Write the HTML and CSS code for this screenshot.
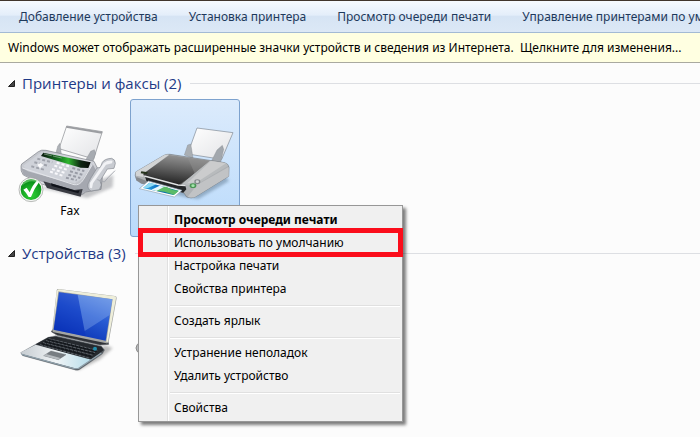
FILE: index.html
```html
<!DOCTYPE html>
<html lang="ru">
  <head>
    <meta charset="UTF-8" />
    <meta name="viewport" content="width=device-width, initial-scale=1.0" />
    <title>Устройства и принтеры</title>
    <link rel="stylesheet" href="styles.css">
  </head>
  <body>
    <nav class="toolbar">
      <button type="button">Добавление устройства</button>
      <button type="button">Установка принтера</button>
      <button type="button">Просмотр очереди печати</button>
      <button type="button">Управление принтерами по умолчанию</button>
    </nav>
    <a class="infobar" href="#">Windows может отображать расширенные значки устройств и сведения из Интернета.&nbsp; Щелкните для изменения...</a>

    <main class="content">
      <section>
        <h2 class="group">
          <svg class="arrow" viewBox="0 0 7 7"><path d="M6.5 0.5V6.5H0.5Z" /></svg>
          <span>Принтеры и факсы (2)</span>
        </h2>
        <div class="tiles">
          <div class="tile">
            <svg class="icon" viewBox="60 72 300 240">
              <defs>
                <linearGradient id="faxBody" x1="0" y1="0" x2="1" y2="1">
                  <stop offset="0" stop-color="#b9bcc3" />
                  <stop offset="0.5" stop-color="#dfe1e6" />
                  <stop offset="1" stop-color="#9a9da5" />
                </linearGradient>
                <linearGradient id="paper" x1="0" y1="0" x2="1" y2="1">
                  <stop offset="0" stop-color="#ffffff" />
                  <stop offset="1" stop-color="#e2e3e6" />
                </linearGradient>
                <linearGradient id="faxScreen">
                  <stop offset="0" stop-color="#0c1a10" />
                  <stop offset="0.35" stop-color="#14731f" />
                  <stop offset="0.55" stop-color="#2fb52f" />
                  <stop offset="0.8" stop-color="#0d2412" />
                  <stop offset="1" stop-color="#070b08" />
                </linearGradient>
                <radialGradient id="okGreen" cx="0.5" cy="0.75" r="0.7">
                  <stop offset="0" stop-color="#2fd236" />
                  <stop offset="1" stop-color="#078b17" />
                </radialGradient>
                <filter id="soft" x="-20%" y="-50%" width="140%" height="200%">
                  <feGaussianBlur stdDeviation="5" />
                </filter>
              </defs>
              <path d="M110 262L262 294L338 262L340 225L250 258Z" fill="#8d8f94" opacity="0.5" filter="url(#soft)" />
              <path d="M200 78L307 95L281 177L177 146Z" fill="url(#paper)" stroke="#85888d" stroke-width="2" />
              <path d="M200 78L307 95L305 101L198 83Z" fill="#9b9da1" />
              <path d="M168 158L173 139L179 130L182 146L184 162Z" fill="#aeb2b7" stroke="#7f8388" />
              <path d="M257 180L272 154L283 149L287 160L278 187Z" fill="#a7abb1" stroke="#7f8388" />
              <path d="M63 198Q61 214 70 225L125 252L229 284Q242 290 257 276L303 268L307 233L282 184L138 151Q124 148 115 155L72 187Q63 191 63 198Z" fill="url(#faxBody)" stroke="#7b7f87" stroke-width="2" />
              <path d="M70 197L125 156L280 187L247 236L224 250L84 212Z" fill="#cfd2d9" />
              <path d="M63 202L84 214L221 252Q238 256 249 239L278 192L300 235L296 262L249 276Q238 289 221 281L71 225Z" fill="#a5a8b0" />
              <path d="M67 204L222 254Q239 257 250 239L277 194" fill="none" stroke="#e2e4e9" stroke-width="3" />
              <path d="M130 244L223 270L248 267L242 290L141 264Z" fill="#393b42" />
              <path d="M153 250L227 272L239 271L235 280L155 258Z" fill="#10131a" />
              <path d="M130 158L272 187L265 204L242 203L123 168Z" fill="url(#faxScreen)" />
              <path d="M132 162L155 167M159 168L185 174" stroke="#9eaa9e" stroke-width="2" />
              <g fill="none" stroke-width="6" stroke-dasharray="9 6">
                <path d="M112 176L157 187M103 187L147 198M94 199L136 210" stroke="#9fa2ab" />
                <path d="M170 188L207 199M163 197L201 209M156 207L196 219M150 215L188 227" stroke="#f8f8fb" />
                <path d="M217 204L253 213M210 214L247 224M205 224L241 234M198 233L230 241" stroke="#989ba5" />
              </g>
              <path d="M112 194L123 188L130 196L120 205Z" fill="#f9f9fb" />
              <path d="M307 187Q314 176 335 175Q346 178 346 190L342 205L322 207L300 243L304 255L298 269L273 273Q261 267 264 252L272 235L291 204L301 202Z" fill="#c8cbd1" stroke="#858991" stroke-width="2" />
              <path d="M311 189Q323 180 338 182L336 190L318 194L279 250L276 265L269 263L270 248Z" fill="#f1f2f5" />
              <path d="M292 239L313 246L325 232L345 212" fill="none" stroke="#a6a9b0" stroke-width="3" />
              <circle cx="93" cy="269" r="36" fill="#f4f6f4" stroke="#989c98" stroke-width="2" />
              <circle cx="93" cy="269" r="31" fill="url(#okGreen)" />
              <path d="M66 257Q90 234 119 250Q112 238 93 238Q72 239 66 257Z" fill="#7bd37b" opacity="0.65" />
              <path d="M70 269L80 263L89 277Q97 255 111 242L117 247Q103 265 93 291H86Q79 278 70 269Z" fill="#fff" />
            </svg>
            <span>Fax</span>
          </div>
          <div class="tile selected">
            <svg class="icon" viewBox="30 87 300 240">
              <defs>
                <linearGradient id="lid" x1="0.6" y1="0" x2="0.35" y2="1">
                  <stop offset="0" stop-color="#969696" />
                  <stop offset="0.45" stop-color="#626262" />
                  <stop offset="1" stop-color="#1c1c1c" />
                </linearGradient>
                <linearGradient id="photo">
                  <stop offset="0" stop-color="#35b0e8" />
                  <stop offset="0.5" stop-color="#0864b8" />
                  <stop offset="1" stop-color="#16a17a" />
                </linearGradient>
              </defs>
              <path d="M50 272L180 306L220 312L312 258L290 230Z" fill="#5d7890" opacity="0.5" filter="url(#soft)" />
              <path d="M216 99L324 113L290 193L188 177Z" fill="url(#paper)" stroke="#7d8791" stroke-width="2" />
              <path d="M178 180L188 150L197 147L200 163L204 190Z" fill="#a9aeb3" stroke="#7b8288" />
              <path d="M257 203L276 165L292 151L296 163L286 207Z" fill="#a2a7ad" stroke="#7b8288" />
              <path d="M32 231L117 181Q125 177 135 178L299 203Q311 207 312 217L311 244L210 306Q199 311 185 306L177 294L65 263L33 251Q29 242 32 231Z" fill="#aeb1b4" stroke="#767c82" stroke-width="2" />
              <path d="M216 270L311 216V244L210 306Q199 310 188 305Z" fill="#c1c3c5" />
              <path d="M32 231L117 181Q124 178 132 179L57 235L55 246L33 242Z" fill="#d2d4d5" />
              <path d="M133 180L255 197L171 267Q165 272 158 270L58 242Q52 239 58 234Z" fill="url(#lid)" />
              <path d="M188 188L255 197L171 267L160 270L210 237Z" fill="#929292" opacity="0.45" />
              <path d="M255 197L299 203Q308 206 309 213L214 269Q197 275 180 267L171 266Z" fill="#b8bbbd" />
              <path d="M257 198L303 205L216 262L187 265Z" fill="#cbcccd" />
              <path d="M59 240L158 269L181 273L184 283L175 293L65 262Z" fill="#242628" />
              <path d="M58 243L159 270L181 272" fill="none" stroke="#e1e3e4" stroke-width="4" />
              <path d="M34 246L65 258L69 270L49 266L33 256Z" fill="#85898d" />
              <path d="M49 229L69 232L65 238L47 235Z" fill="#26331d" />
              <path d="M70 258L171 286L148 306L43 281Z" fill="#fff" stroke="#8fa2b2" stroke-width="2" />
              <path d="M73 263L161 287L145 300L54 279Z" fill="url(#photo)" />
              <path d="M73 263L94 268L69 279L54 279Z" fill="#8edaf3" />
              <path d="M88 287Q105 272 125 276L143 285L161 288L148 299L118 290Z" fill="#5cbb68" />
              <path d="M104 272L118 275L94 288L79 284Z" fill="#e6f7fd" />
              <ellipse cx="217" cy="260" rx="9" ry="7" fill="#83888b" />
              <ellipse cx="217" cy="260" rx="5" ry="4" fill="#d3d6d7" />
              <ellipse cx="204" cy="272" rx="10" ry="7" fill="#4a9455" />
              <ellipse cx="204" cy="272" rx="5" ry="4" fill="#a4e6ac" />
            </svg>
          </div>
        </div>
      </section>

      <section>
        <h2 class="group">
          <svg class="arrow" viewBox="0 0 7 7"><path d="M6.5 0.5V6.5H0.5Z" /></svg>
          <span>Устройства (3)</span>
        </h2>
        <div class="tiles devices">
          <div class="tile">
            <svg class="icon tall" viewBox="60 150 300 264">
              <defs>
                <linearGradient id="display" x1="0.8" y1="0" x2="0.3" y2="1">
                  <stop offset="0" stop-color="#608ce3" />
                  <stop offset="0.45" stop-color="#285bd3" />
                  <stop offset="1" stop-color="#0730b2" />
                </linearGradient>
                <linearGradient id="palmrest">
                  <stop offset="0" stop-color="#c7cdd2" />
                  <stop offset="0.5" stop-color="#f0f4f6" />
                  <stop offset="1" stop-color="#b5dcea" />
                </linearGradient>
              </defs>
              <path d="M215 390L315 328L338 336L300 370L236 402Z" fill="#777" opacity="0.5" filter="url(#soft)" />
              <path d="M154 287L172 298L300 327L326 325L324 317L158 281Z" fill="#303338" stroke="#55585d" stroke-width="2" />
              <path d="M176 159L345 180Q351 181 350 187L326 318Q325 323 319 322L161 289Q156 287 157 282L170 163Q171 158 176 159Z" fill="#a4a6a4" />
              <path d="M176 160L345 181Q349 182 348 187L324 317L319 318L338 190L175 166L159 280L170 164Z" fill="#eeeeda" />
              <path d="M177 169L337 190L317 314L161 281Z" fill="url(#display)" />
              <path d="M177 169L233 176L257 301L161 281Z" fill="#082fbe" opacity="0.35" />
              <path d="M233 176L337 190L329 237Q280 269 254 285Z" fill="#a7c8f6" opacity="0.3" />
              <path d="M62 350L144 304L167 299L304 330L314 342L307 354L238 401Q231 404 222 401L68 359Z" fill="#555b60" stroke="#747a7e" />
              <path d="M107 325L146 304L168 302L304 332L311 342L271 374Z" fill="#25292e" />
              <g fill="none" stroke="#788088" stroke-width="2" stroke-dasharray="9 3">
                <path d="M146 308L292 343M138 314L285 350M129 320L279 358M120 326L270 367" />
              </g>
              <g stroke="#11151a" stroke-width="4">
                <path d="M143 311L290 346M134 317L283 353M125 323L276 362" stroke-dasharray="10 2" />
              </g>
              <path d="M63 349L107 326L274 371L235 397L222 396L65 354Z" fill="url(#palmrest)" />
              <path d="M65 355L222 398L236 397L304 351" fill="none" stroke="#8fa0ab" stroke-width="4" />
              <path d="M153 345L198 356L175 371L131 359Z" fill="#777d82" stroke="#555b60" />
              <path d="M131 359L175 371L181 366L138 354Z" fill="#b6bbbf" />
              <circle cx="285" cy="338" r="6" fill="#218eae" />
            </svg>
          </div>
          <div class="tile">
            <svg class="icon tall" viewBox="0 0 100 88">
              <ellipse cx="18" cy="62" rx="17" ry="9" fill="#b9bbbe" stroke="#888" />
            </svg>
          </div>
        </div>
      </section>

      <div class="menu" role="menu">
        <button type="button" role="menuitem" class="default">Просмотр очереди печати</button>
        <button type="button" role="menuitem" class="marked">Использовать по умолчанию</button>
        <button type="button" role="menuitem">Настройка печати</button>
        <button type="button" role="menuitem">Свойства принтера</button>
        <hr />
        <button type="button" role="menuitem">Создать ярлык</button>
        <hr />
        <button type="button" role="menuitem">Устранение неполадок</button>
        <button type="button" role="menuitem">Удалить устройство</button>
        <hr />
        <button type="button" role="menuitem">Свойства</button>
      </div>
    </main>
  </body>
</html>
```
FILE: styles.css
```css
* {
  box-sizing: border-box;
}
body {
  margin: 0;
  min-height: 100vh;
  background: #fcfcfc;
  font-family: "Noto Sans", "Open Sans", sans-serif;
  font-size: 12px;
  color: #000;
}
button {
  border: 0;
  padding: 0;
  background: none;
  font: inherit;
  white-space: nowrap;
}

.toolbar {
  display: flex;
  gap: 31px;
  height: 33px;
  padding: 0 19px;
  border-top: 1px solid #40352c;
  border-bottom: 1px solid #a3bad4;
  background: linear-gradient(#f6fafe, #e4eefa 45%, #d6e4f4 50%, #dce8f6);
  overflow: hidden;
}
.toolbar button {
  color: #1e395b;
}
.infobar {
  display: block;
  height: 30px;
  padding: 0 8px;
  border-bottom: 1px solid #a9a9a0;
  background: #ffffe1;
  color: #000;
  line-height: 30px;
  text-decoration: none;
  white-space: nowrap;
}

.content {
  position: relative;
  padding: 8px 0 0 8px;
}
.group {
  display: flex;
  align-items: center;
  height: 24px;
  margin: 0 0 4px;
  color: #1f3a87;
  font-family: "Open Sans", "Noto Sans", sans-serif;
  font-size: 15px;
  font-weight: normal;
  white-space: nowrap;
}
.group::after {
  content: "";
  flex: 1;
  height: 1px;
  margin-left: 9px;
  background: #dddfe3;
}
.arrow {
  width: 7px;
  height: 7px;
  margin-right: 7px;
  fill: #444;
  stroke: #222;
}
.tiles {
  display: flex;
  gap: 5px;
  margin: 0 0 4px 7px;
}
.tile {
  display: flex;
  flex-direction: column;
  align-items: center;
  width: 110px;
  height: 138px;
  padding-top: 24px;
  border: 1px solid transparent;
  border-radius: 3px;
  line-height: 14px;
}
.devices .tile {
  padding-top: 16px;
}
.selected {
  border-color: #7da2ce;
  background: linear-gradient(#dcebfc, #b9dafb);
}
.icon {
  width: 100px;
  height: 80px;
  overflow: visible;
}
.tall {
  height: 88px;
}

/* context menu, opens over the tiles */
.menu {
  position: absolute;
  left: 138px;
  top: 142px;
  width: 265px;
  padding: 2px;
  border: 1px solid #979797;
  background: linear-gradient(90deg, #f1f1f1 28px, #e0e0e0 28px 29px, #fff 29px 30px, #f0f0f0 30px);
  box-shadow: 3px 3px 3px rgba(0, 0, 0, 0.5);
}
.menu button {
  display: block;
  width: 100%;
  height: 23px;
  padding-left: 33px;
  text-align: left;
}
.menu .default {
  font-weight: bold;
}
.menu .marked {
  outline: 5px solid #fb0d1b;
  outline-offset: -2px;
}
.menu hr {
  height: 2px;
  margin: 5px 0 2px 29px;
  border: 0;
  border-top: 1px solid #e0e0e0;
  background: #fff;
}
```
